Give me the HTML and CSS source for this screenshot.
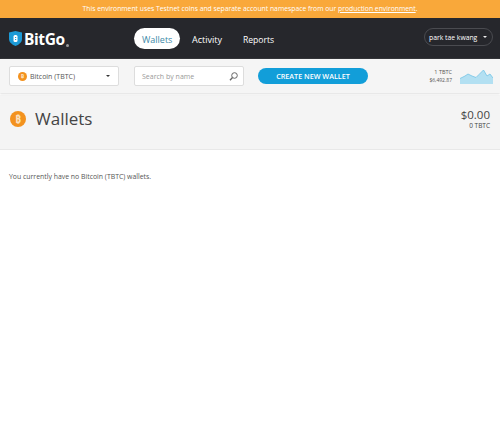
FILE: index.html
```html
<!DOCTYPE html>
<html lang="en">
<head>
<meta charset="utf-8">
<title>BitGo Wallets</title>
<link rel="stylesheet" href="styles.css">
</head>
<body>
<div class="banner">This environment uses Testnet coins and separate account namespace from our <a href="#">production environment</a>.</div>
<nav class="nav">
  <div class="logo">
    <svg class="shield" width="13" height="15" viewBox="0 0 13 15"><path d="M0 1.500 6.500 0 13 1.500V8c0 3.500-3.500 5.800-6.500 7C3.500 13.800 0 11.500 0 8Z" fill="#1c9ad6"/><rect x="4.500" y="4" width="4" height="7" rx="1.500" fill="#fff"/><rect x="6" y="6" width="1.200" height="1" fill="#1c9ad6"/><rect x="6" y="8" width="1.200" height="1" fill="#1c9ad6"/></svg>
    <span class="logo-text">BitGo</span><span class="logo-dot"></span>
  </div>
  <div class="tabs">
    <a class="tab tab-active" href="#">Wallets</a>
    <a class="tab" href="#">Activity</a>
    <a class="tab tab-last" href="#">Reports</a>
  </div>
  <div class="user">park tae kwang<span class="caret caret-light"></span></div>
</nav>
<div class="toolbar">
  <div class="coin-select">
    <span class="coin coin-small">₿</span>
    <span class="coin-name">Bitcoin (TBTC)</span>
    <span class="caret caret-dark"></span>
  </div>
  <div class="search">
    <span>Search by name</span>
    <svg width="9" height="9" viewBox="0 0 9 9"><circle cx="5.500" cy="3.500" r="2.800" fill="none" stroke="#666" stroke-width="1"/><path d="M3.500 5.500 1 8.300" stroke="#666" stroke-width="1.300"/></svg>
  </div>
  <a class="create" href="#">CREATE NEW WALLET</a>
  <div class="price">
    <div class="price-text"><div>1 TBTC</div><div class="price-usd">$6,492.87</div></div>
    <svg width="33" height="17" viewBox="0 0 33 17"><path d="M0 16V10.500L5 8 8 6 12 8 16 9.500 19 6.500 23.500 2 27 8 30 6 33 10V16Z" fill="#b3e0f2"/><path d="M0 10.500 5 8 8 6 12 8 16 9.500 19 6.500 23.500 2 27 8 30 6 33 10" fill="none" stroke="#74c4e6" stroke-width=".8"/></svg>
  </div>
</div>
<header class="page-head">
  <span class="coin coin-large">₿</span>
  <h1>Wallets</h1>
  <div class="balance"><div class="balance-usd">$0.00</div><div class="balance-coin">0 TBTC</div></div>
</header>
<main class="content">You currently have no Bitcoin (TBTC) wallets.</main>
</body>
</html>
```
FILE: styles.css
```css
* { box-sizing: border-box; }
html, body { margin: 0; background: #fff; }
body { font-family: "Open Sans", "Noto Sans", sans-serif; color: #444; height: 431px; overflow: hidden; }
a { color: inherit; text-decoration: none; }

.banner { height: 18px; background: #f9a83a; color: #fff; font-size: 6.800px; line-height: 17px; text-align: center; }
.banner a { text-decoration: underline; }

.nav { height: 41px; background: #26272c; display: flex; align-items: center; padding: 0 7px 0 9px; color: #fff; }
.logo { width: 125px; display: flex; align-items: center; }
.shield { margin-right: 2px; }
.logo-text { font-weight: 700; font-size: 15.500px; letter-spacing: -.4px; }
.logo-dot { width: 3px; height: 3px; border-radius: 50%; background: #999; align-self: flex-end; margin: 0 0 3px 1px; }
.tabs { display: flex; flex: 1; align-items: center; }
.tab { height: 21px; line-height: 23px; font-size: 9px; padding: 0 8px; margin-right: 6px; border-radius: 11px; color: #fff; }
.tab-active { background: #fff; color: #3d8aa8; margin-right: 4px; width: 46px; }
.tab-last { font-size: 8.600px; line-height: 24px; margin-left: -1px; }
.user { width: 69px; height: 18px; border: 1px solid #4a4b50; border-radius: 9px; font-size: 6.800px; padding: 0 5px 0 4px; display: flex; align-items: center; justify-content: space-between; margin-top: -3px; }
.caret { width: 0; height: 0; border-left: 2.500px solid transparent; border-right: 2.500px solid transparent; border-top: 2.500px solid; }
.caret-light { border-top-color: #eee; }
.caret-dark { border-top-color: #333; }

.toolbar { height: 34px; background: #f5f5f5; display: flex; align-items: center; padding: 0 7px 0 9px; box-shadow: 0 1px 2px #ddd; position: relative; }
.coin-select { width: 110px; height: 20px; background: #fff; border: 1px solid #ddd; border-radius: 2px; display: flex; align-items: center; padding: 0 8px; font-size: 7px; color: #555; }
.coin-name { flex: 1; margin-left: 3px; }
.search { width: 110px; height: 20px; margin-left: 15px; background: #fff; border: 1px solid #ddd; border-radius: 2px; display: flex; align-items: center; justify-content: space-between; padding: 0 5px 0 7px; font-size: 7px; color: #999; }
.create { width: 110px; height: 16px; margin-left: 14px; background: #129ed9; border-radius: 8px; color: #fff; font-size: 7.200px; font-weight: 600; line-height: 16px; text-align: center; }
.price { margin-left: auto; display: flex; align-items: center; gap: 8px; }
.price-text { text-align: right; font-size: 5.500px; line-height: 8px; color: #555; }
.price-usd { font-size: 5px; }

.coin { display: flex; align-items: center; justify-content: center; border-radius: 50%; background: #f3921f; color: #fbe1bf; font-weight: 700; flex: none; }
.coin-small { width: 9px; height: 9px; font-size: 6px; }
.coin-large { width: 16px; height: 16px; font-size: 10px; }

.page-head { height: 57px; background: #f4f4f4; border-top: 2px solid #fff; border-bottom: 1px solid #e8e8e8; display: flex; align-items: center; padding: 0 10px 6px; }
h1 { margin: -1px 0 0 9px; font-size: 17px; font-weight: 400; color: #444; flex: 1; }
.balance { text-align: right; color: #444; }
.balance-usd { font-size: 11.500px; line-height: 14px; }
.balance-coin { font-size: 6.500px; line-height: 8px; }

.content { padding: 22px 9px; font-size: 6.900px; line-height: 10px; color: #555; }
```
